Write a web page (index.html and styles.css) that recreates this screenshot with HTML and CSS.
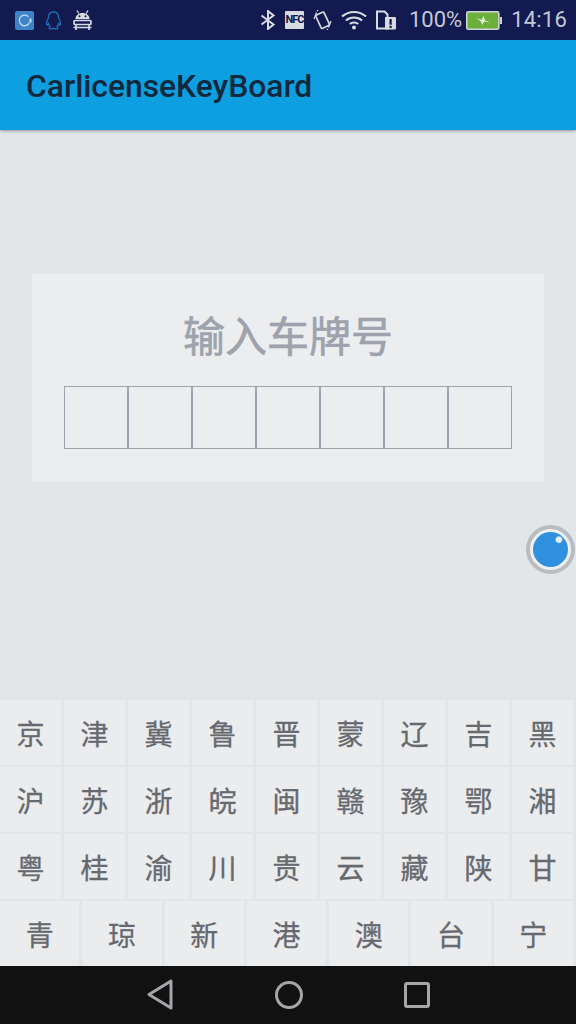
FILE: index.html
```html
<!DOCTYPE html>
<html lang="zh-CN">
<head>
<meta charset="utf-8">
<title>CarlicenseKeyBoard</title>
<link rel="stylesheet" href="styles.css">
</head>
<body>
<div class="screen">
  <header class="status">
    <div class="status-left">
      <svg width="19" height="19" viewBox="0 0 19 19"><rect width="19" height="19" rx="2" fill="#3f83c9"/><path d="M13.500 5.800A5.300 5.300 0 1 0 14.500 11.500" fill="none" stroke="#c5dcf2" stroke-width="1.300"/><rect x="14.500" y="7.500" width="2" height="4" fill="#c5dcf2"/></svg>
      <svg width="17" height="19" viewBox="0 0 17 19"><path d="M8.500 1C5 1 3.500 3.300 3.500 6.500C2 9.500 1 12.500 1.800 14C2.500 14 3 13 3.500 12.500C3.700 14 4.500 15 5 15.500C3.500 16 3.500 18 6 18C7 18 8 17.500 8.500 17.300C9 17.500 10 18 11 18C13.500 18 13.500 16 12 15.500C12.500 15 13.300 14 13.500 12.500C14 13 14.500 14 15.200 14C16 12.500 15 9.500 13.500 6.500C13.500 3.300 12 1 8.500 1Z" fill="none" stroke="#1f6fb5" stroke-width="1.300"/></svg>
      <svg width="19" height="20" viewBox="0 0 19 20" fill="none" stroke="#d8dbe2" stroke-width="1.700"><path d="M2.500 9C2.500 5.500 5.500 3 9.500 3C13.500 3 16.500 5.500 16.500 9Z" fill="#d8dbe2" stroke="none"/><path d="M4 0.500L5.800 3.500M15 0.500L13.200 3.500" stroke-width="1.300"/><circle cx="6.500" cy="6.300" r="1" fill="#13194f" stroke="none"/><circle cx="12.500" cy="6.300" r="1" fill="#13194f" stroke="none"/><rect x="1" y="10.500" width="17" height="4" rx="1"/><path d="M3 14.500V20M16 14.500V20M0.500 17.500H18.500"/></svg>
    </div>
    <div class="status-right">
      <svg width="16" height="20" viewBox="0 0 16 20" fill="none" stroke="#d8dbe2" stroke-width="2"><path d="M1.500 5.500L13.500 14.500L8 19V1L13.500 5.500L1.500 14.500"/></svg>
      <span class="nfc">NFC</span>
      <svg width="19" height="20" viewBox="0 0 19 20" fill="none" stroke="#d8dbe2" stroke-width="1.700"><rect x="5" y="3" width="9" height="14.500" rx="1.300" transform="rotate(-25 9.500 10)"/><path d="M1 9L3.500 2.500M18 11L15.500 17.500M4 1L5 0M15 19L14 20" stroke-width="1.200"/></svg>
      <svg width="26" height="20" viewBox="0 0 26 20" fill="none" stroke="#d8dbe2" stroke-width="2.200"><path d="M1 6.500C8 0.500 18 0.500 25 6.500M5 10.500C9.500 6.500 16.500 6.500 21 10.500M8.800 14C11 12 15 12 17.200 14"/><circle cx="13" cy="17.500" r="2" fill="#d8dbe2" stroke="none"/></svg>
      <svg width="20" height="20" viewBox="0 0 20 20"><path d="M1 1.500H8.500L11.500 4.500V18.500H1Z" fill="none" stroke="#d8dbe2" stroke-width="2"/><rect x="9" y="7" width="11" height="12.500" rx="1" fill="#d8dbe2"/><rect x="13.500" y="9" width="2.200" height="5.800" fill="#13194f"/><rect x="13.500" y="15.800" width="2.200" height="2.200" fill="#13194f"/></svg>
      <span class="status-text pct">100%</span>
      <svg width="36" height="19" viewBox="0 0 36 19"><rect x="0.800" y="0.800" width="32" height="17.400" rx="1.500" fill="#6ab03a" stroke="#cfd3da" stroke-width="1.600"/><rect x="33.800" y="6" width="2.200" height="7" fill="#cfd3da"/><path d="M10 7L15.500 9L17.500 5L19 9.500L24 11.500L18 10.500L16.500 14L14.500 10Z" fill="#e8f0dc"/></svg>
      <span class="status-text time">14:16</span>
    </div>
  </header>
  <div class="appbar"><h1 class="appbar-title">CarlicenseKeyBoard</h1></div>
  <main class="content">
    <section class="card">
      <h2 class="card-title">输入车牌号</h2>
      <div class="plate">
        <div class="cell"></div><div class="cell"></div><div class="cell"></div><div class="cell"></div><div class="cell"></div><div class="cell"></div><div class="cell"></div>
      </div>
    </section>
    <div class="floater"><div class="floater-dot"></div></div>
  </main>
  <section class="keyboard">
    <div class="row row9"><div class="key">京</div><div class="key">津</div><div class="key">冀</div><div class="key">鲁</div><div class="key">晋</div><div class="key">蒙</div><div class="key">辽</div><div class="key">吉</div><div class="key">黑</div></div>
    <div class="row row9"><div class="key">沪</div><div class="key">苏</div><div class="key">浙</div><div class="key">皖</div><div class="key">闽</div><div class="key">赣</div><div class="key">豫</div><div class="key">鄂</div><div class="key">湘</div></div>
    <div class="row row9"><div class="key">粤</div><div class="key">桂</div><div class="key">渝</div><div class="key">川</div><div class="key">贵</div><div class="key">云</div><div class="key">藏</div><div class="key">陕</div><div class="key">甘</div></div>
    <div class="row row7"><div class="key">青</div><div class="key">琼</div><div class="key">新</div><div class="key">港</div><div class="key">澳</div><div class="key">台</div><div class="key">宁</div></div>
  </section>
  <nav class="navbar">
    <svg width="28" height="32" viewBox="0 0 28 32" fill="none" stroke="#a4a6a9" stroke-width="3" stroke-linejoin="round"><path d="M25 2V29L3 15.500Z"/></svg>
    <svg width="28" height="28" viewBox="0 0 28 28" fill="none" stroke="#a4a6a9" stroke-width="3"><circle cx="14" cy="14" r="12.500"/></svg>
    <svg width="26" height="26" viewBox="0 0 26 26" fill="none" stroke="#a4a6a9" stroke-width="3"><rect x="1.500" y="1.500" width="23" height="23" rx="1.500"/></svg>
  </nav>
</div>
</body>
</html>
```
FILE: styles.css
```css
* { box-sizing: border-box; }
html, body { margin: 0; padding: 0; }
body { width: 576px; height: 1024px; overflow: hidden; font-family: Roboto, "Noto Sans CJK SC", sans-serif; }
.screen { width: 576px; height: 1024px; display: flex; flex-direction: column; background: #e3e6e8; }

.status { height: 40px; flex: none; background: #121a50; display: flex; justify-content: space-between; align-items: center; padding: 0 9px 0 15px; }
.status-left { display: flex; align-items: center; gap: 11px; }
.status-right { display: flex; align-items: center; gap: 9px; }
.status-text { color: #c3c8d4; font-size: 22px; line-height: 40px; }
.pct { margin-left: 4px; margin-right: -5px; }
.time { letter-spacing: 0.2px; }
.nfc { width: 19px; height: 18px; background: #d8dbe2; color: #13194f; font-size: 11px; font-weight: 700; line-height: 18px; text-align: center; letter-spacing: -1px; border-radius: 1px; }

.appbar { height: 90px; flex: none; background: #0d9fe0; display: flex; align-items: center; padding: 2px 26px 0; box-shadow: 0 1px 3px rgba(40,60,80,.45); position: relative; }
.appbar-title { margin: 0; font-size: 31.8px; font-weight: 500; color: #10283c; }

.content { flex: 1; position: relative; padding: 144px 32px 0; }
.card { height: 208px; background: #ebedee; display: flex; flex-direction: column; align-items: center; padding-top: 30px; }
.card-title { margin: 0; font-family: "Noto Sans CJK SC", sans-serif; font-size: 42px; font-weight: 400; line-height: 60px; color: #9da2ac; -webkit-text-stroke: 0.6px #9da2ac; }
.plate { margin-top: 22px; display: grid; grid-template-columns: repeat(7, 64px); height: 63px; }
.cell { border: 1px solid #9da2ac; }

.floater { position: absolute; right: 1px; top: 395px; width: 49px; height: 49px; border-radius: 50%; border: 4px solid #b9bcc0; background: #eef0f1; display: flex; align-items: center; justify-content: flex-start; padding-left: 3px; }
.floater-dot { width: 35px; height: 35px; border-radius: 50%; background: radial-gradient(circle at 74% 22%, #e8f2fb 0 2.5px, #2f90df 4px); }

.keyboard { flex: none; display: flex; flex-direction: column; gap: 2px; }
.row { height: 65px; display: grid; column-gap: 3px; padding-right: 3px; }
.row9 { grid-template-columns: repeat(9, 1fr); }
.row7 { grid-template-columns: repeat(7, 1fr); }
.key { background: #ebecee; color: #66696e; font-family: "Noto Sans CJK SC", sans-serif; font-size: 28px; -webkit-text-stroke: 0.3px #66696e; display: flex; align-items: center; justify-content: center; }

.navbar { height: 58px; flex: none; background: #111112; display: flex; align-items: center; justify-content: space-between; padding: 0 146px; }
```
